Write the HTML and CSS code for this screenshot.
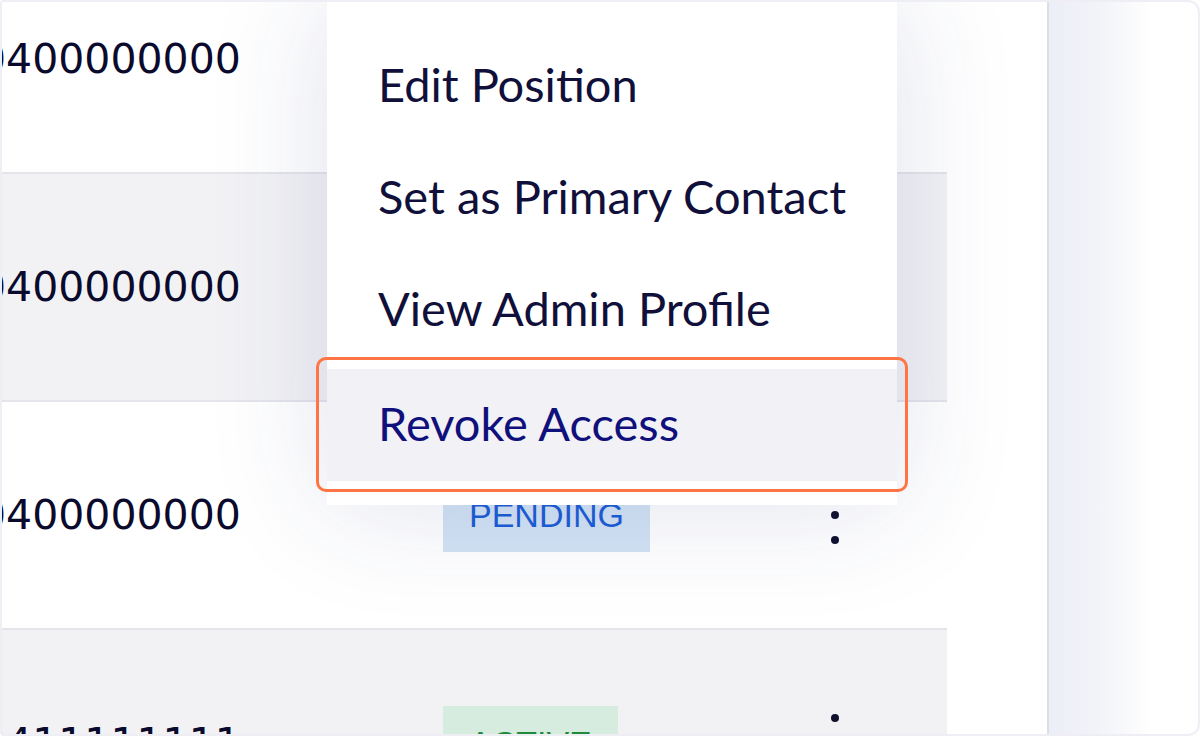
FILE: index.html
```html
<!DOCTYPE html>
<html lang="en">
<head>
<meta charset="utf-8">
<title>Admins</title>
<link rel="stylesheet" href="styles.css">
</head>
<body>
<div class="frame">
  <div class="table-area">
    <div class="rows">
      <div class="row">
        <div class="cell phone"><span class="num">0400000000</span></div>
        <div class="cell status"></div>
        <div class="cell actions"></div>
      </div>
      <div class="row alt">
        <div class="cell phone"><span class="num">0400000000</span></div>
        <div class="cell status"></div>
        <div class="cell actions"></div>
      </div>
      <div class="row">
        <div class="cell phone"><span class="num">0400000000</span></div>
        <div class="cell status"><span class="badge pending">PENDING</span></div>
        <div class="cell actions"><span class="kebab"><i></i><i></i><i></i></span></div>
      </div>
      <div class="row alt">
        <div class="cell phone"><span class="num">0411111111</span></div>
        <div class="cell status"><span class="badge active">ACTIVE</span></div>
        <div class="cell actions"><span class="kebab"><i></i><i></i><i></i></span></div>
      </div>
    </div>
    <ul class="menu">
      <li class="item">Edit Position</li>
      <li class="item">Set as Primary Contact</li>
      <li class="item">View Admin Profile</li>
      <li class="item danger">Revoke Access</li>
    </ul>
    <div class="highlight"></div>
  </div>
  <div class="spacer"></div>
  <div class="panel"></div>
  <div class="rest"></div>
</div>
</body>
</html>
```

FILE: styles.css
```css
html, body {
  margin: 0;
  padding: 0;
  background: #ffffff;
}

.frame {
  width: 1200px;
  height: 736px;
  box-sizing: border-box;
  border: 2px solid #efeef4;
  border-radius: 4px 12px 12px 4px;
  overflow: hidden;
  display: flex;
  background: #ffffff;
}

.table-area {
  position: relative;
  width: 945px;
  flex: none;
}

.rows {
  margin-top: -56px;
}

.row {
  display: grid;
  grid-template-columns: 441px 370px 1fr;
  height: 226px;
  border-bottom: 2px solid #e4e4eb;
  background: #ffffff;
}

.row.alt {
  background: #f2f2f5;
}

.cell {
  display: flex;
  align-items: center;
}

.num {
  font-family: "DejaVu Sans", Verdana, sans-serif;
  font-size: 41px;
  color: #0a0a2c;
  margin-left: -22px;
  white-space: nowrap;
}

.badge {
  display: inline-flex;
  align-items: center;
  height: 74px;
  padding: 0 26px;
  font-family: "Liberation Sans", Arial, sans-serif;
  font-size: 34px;
}

.badge.pending {
  background: #d3e3f5;
  color: #1b5dd6;
}

.badge.active {
  background: #d6ecde;
  color: #1f8a3c;
}

.actions {
  padding-left: 18px;
}

.kebab {
  display: flex;
  flex-direction: column;
  gap: 17px;
}

.kebab i {
  display: block;
  width: 8px;
  height: 8px;
  border-radius: 50%;
  background: #10102e;
}

.menu {
  position: absolute;
  left: 325px;
  top: -2px;
  width: 570px;
  margin: 0;
  padding: 30px 0 24px;
  list-style: none;
  background: #ffffff;
  box-shadow: 0 0 110px rgba(50, 60, 130, 0.15);
  z-index: 2;
}

.item {
  height: 112px;
  display: flex;
  align-items: center;
  padding-left: 51px;
  font-family: Lato, "Open Sans", sans-serif;
  font-size: 47px;
  color: #10103a;
  box-sizing: border-box;
  padding-bottom: 4px;
}

.item.danger {
  margin-top: 3px;
  background: #f2f2f6;
  color: #10107c;
}

.highlight {
  position: absolute;
  left: 314px;
  top: 355px;
  width: 592px;
  height: 135px;
  box-sizing: border-box;
  border: 3px solid #ff7444;
  border-radius: 10px;
  z-index: 3;
}

.spacer {
  width: 100px;
  flex: none;
}

.panel {
  width: 106px;
  flex: none;
  border-left: 2px solid #dedde5;
  box-sizing: border-box;
  background: linear-gradient(to right, #eceef7 0%, #f3f4f9 50%, #ffffff 100%);
}

.rest {
  flex: 1;
}
```
